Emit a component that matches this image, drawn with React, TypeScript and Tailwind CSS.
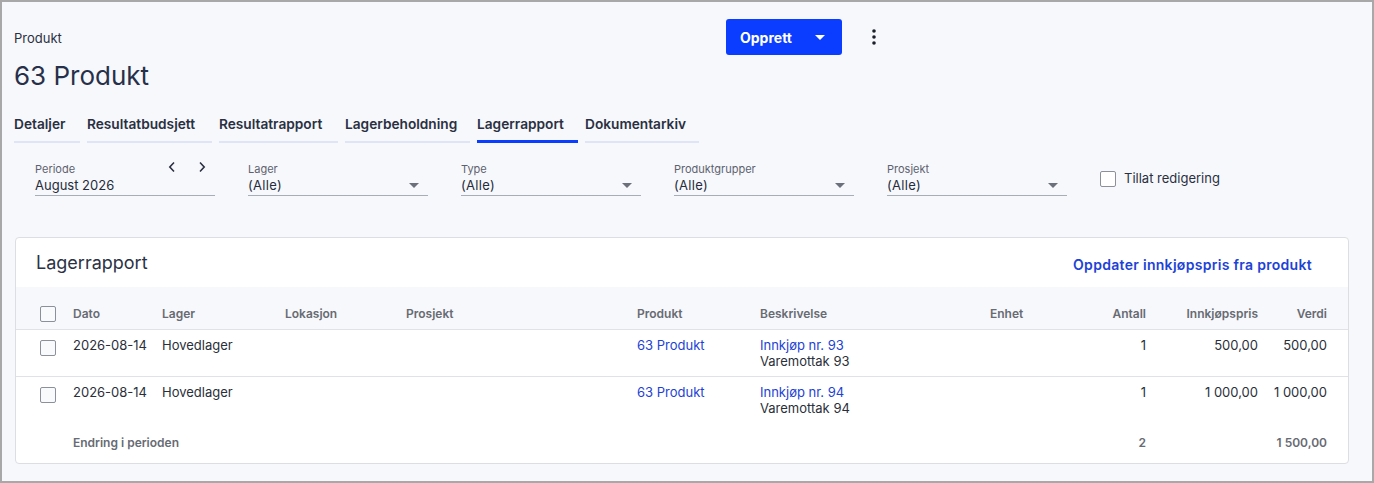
import React from "react";

const FONT = { fontFamily: "Inter, 'Noto Sans', sans-serif" };

const tabs = [
  { label: "Detaljer", w: "w-[66px]" },
  { label: "Resultatbudsjett", w: "w-[125px]" },
  { label: "Resultatrapport", w: "w-[119px]" },
  { label: "Lagerbeholdning", w: "w-[125px]" },
  { label: "Lagerrapport", w: "w-[101px]" },
  { label: "Dokumentarkiv", w: "w-[114px]" },
];

const COLS =
  "grid grid-cols-[33px_89px_123px_121px_231px_123px_230px_76px_80px_112px_69px] pl-[24px] pr-[21px]";

const rows = [
  { date: "2026-08-14", lager: "Hovedlager", nr: "93", qty: "1", price: "500,00", value: "500,00" },
  { date: "2026-08-14", lager: "Hovedlager", nr: "94", qty: "1", price: "1 000,00", value: "1 000,00" },
];

function Caret({ className = "" }: { className?: string }) {
  return (
    <svg width="10" height="5" viewBox="0 0 10 5" className={className}>
      <path d="M0 0h10L5 5z" fill="currentColor" />
    </svg>
  );
}

function Box() {
  return (
    <span className="block h-4 w-4 rounded-[2px] border border-[#8b909a] bg-[#f9fafc]" />
  );
}

function SelectField({ label, value }: { label: string; value: string }) {
  return (
    <div className="w-[180px] border-b border-[#a9adb5]">
      <div className="text-[11px] leading-[14px] text-[#5d6270]">{label}</div>
      <div className="flex h-[19px] items-center justify-between pr-[9px]">
        <span className="text-[13px] tracking-[0.3px] text-[#262c3b]">{value}</span>
        <Caret className="text-[#6b707b]" />
      </div>
    </div>
  );
}

export default function App() {
  return (
    <div
      style={FONT}
      className="h-[483px] w-full overflow-hidden border-2 border-[#a8a8a8] bg-[#f7f8fb] text-[#262c3b]"
    >
      <div className="flex w-[874px] items-start justify-between pl-[12px] pt-[17px]">
        <div>
          <div className="mt-[11px] text-[13px] leading-[16px] text-[#2a3042]">Produkt</div>
          <h1 className="mt-[14px] text-[26px] leading-[32px] text-[#27304a]">63 Produkt</h1>
        </div>
        <div className="flex items-center gap-[30px]">
          <button className="flex h-9 w-[116px] items-center rounded-[3px] bg-[#0a3dff] pl-[14px] text-[14px] font-bold text-white">
            Opprett
            <Caret className="ml-[23px] text-white" />
          </button>
          <svg width="4" height="16" viewBox="0 0 4 16" className="text-[#1b1f2a]">
            <circle cx="2" cy="2" r="1.8" fill="currentColor" />
            <circle cx="2" cy="8" r="1.8" fill="currentColor" />
            <circle cx="2" cy="14" r="1.8" fill="currentColor" />
          </svg>
        </div>
      </div>

      <div className="mt-[22px] flex gap-[7px] pl-[12px]">
        {tabs.map((t) => {
          const active = t.label === "Lagerrapport";
          return (
            <div
              key={t.label}
              className={`${t.w} pb-[6px] text-[13.7px] font-semibold leading-[20px] text-[#2a3042] ${
                active ? "border-b-[3px] border-[#0a3dff]" : "border-b-2 border-[#dfe5f6]"
              }`}
            >
              {t.label}
            </div>
          );
        })}
      </div>

      <div className="mt-[19px] flex items-start gap-[33px] pl-[33px]">
        <div className="w-[180px] border-b border-[#a9adb5]">
          <div className="flex h-[14px] items-center text-[11px] leading-[14px] text-[#5d6270]">
            <span className="flex-1">Periode</span>
            <svg width="8" height="12" viewBox="0 0 8 12" className="-mt-[4px] mr-[22px] text-[#2a3042]">
              <path d="M6 1.5L1.8 6 6 10.5" fill="none" stroke="currentColor" strokeWidth="1.6" />
            </svg>
            <svg width="8" height="12" viewBox="0 0 8 12" className="-mt-[4px] mr-[9px] text-[#2a3042]">
              <path d="M2 1.5L6.2 6 2 10.5" fill="none" stroke="currentColor" strokeWidth="1.6" />
            </svg>
          </div>
          <div className="flex h-[19px] items-center text-[13px] text-[#262c3b]">August 2026</div>
        </div>
        <SelectField label="Lager" value="(Alle)" />
        <SelectField label="Type" value="(Alle)" />
        <SelectField label="Produktgrupper" value="(Alle)" />
        <SelectField label="Prosjekt" value="(Alle)" />
        <label className="flex items-center gap-[8px] pt-[7px]">
          <span className="block h-4 w-4 rounded-[2px] border border-[#8b909a] bg-white" />
          <span className="text-[13px] text-[#2a3042]">Tillat redigering</span>
        </label>
      </div>

      <div className="ml-[13px] mr-[23px] mt-[41px] rounded-[4px] border border-[#dcdee3] bg-white">
        <div className="flex h-[49px] items-center justify-between pl-[20px] pr-[36px]">
          <h2 className="text-[18px] text-[#2b3245]">Lagerrapport</h2>
          <a className="mt-[3px] text-[14px] font-semibold tracking-[0.3px] text-[#1d42d6]">
            Oppdater innkjøpspris fra produkt
          </a>
        </div>

        <div className={`${COLS} items-center border-b border-[#e0e2e7] bg-[#f7f8fb] pb-[7px] pt-[19px] text-[12px] font-semibold leading-[16px] text-[#676b73]`}>
          <Box />
          <span>Dato</span>
          <span>Lager</span>
          <span>Lokasjon</span>
          <span>Prosjekt</span>
          <span>Produkt</span>
          <span>Beskrivelse</span>
          <span>Enhet</span>
          <span className="text-right">Antall</span>
          <span className="text-right">Innkjøpspris</span>
          <span className="text-right">Verdi</span>
        </div>

        {rows.map((r, i) => (
          <div
            key={r.nr}
            className={`${COLS} items-start py-[7px] text-[13px] leading-[16px] text-[#2a2f3a] ${
              i === 0 ? "border-b border-[#e0e2e7]" : ""
            }`}
          >
            <span className="pt-[3px]">
              <Box />
            </span>
            <span>{r.date}</span>
            <span>{r.lager}</span>
            <span />
            <span />
            <span className="text-[#1d42d6]">63 Produkt</span>
            <span>
              <span className="block text-[#1d42d6]">Innkjøp nr. {r.nr}</span>
              <span className="block">Varemottak {r.nr}</span>
            </span>
            <span />
            <span className="text-right">{r.qty}</span>
            <span className="text-right">{r.price}</span>
            <span className="text-right">{r.value}</span>
          </div>
        ))}

        <div className={`${COLS} pb-[12px] pt-[12px] text-[12px] font-semibold leading-[16px] text-[#676b73]`}>
          <span />
          <span className="col-span-7">Endring i perioden</span>
          <span className="text-right">2</span>
          <span />
          <span className="text-right">1 500,00</span>
        </div>
      </div>
    </div>
  );
}
